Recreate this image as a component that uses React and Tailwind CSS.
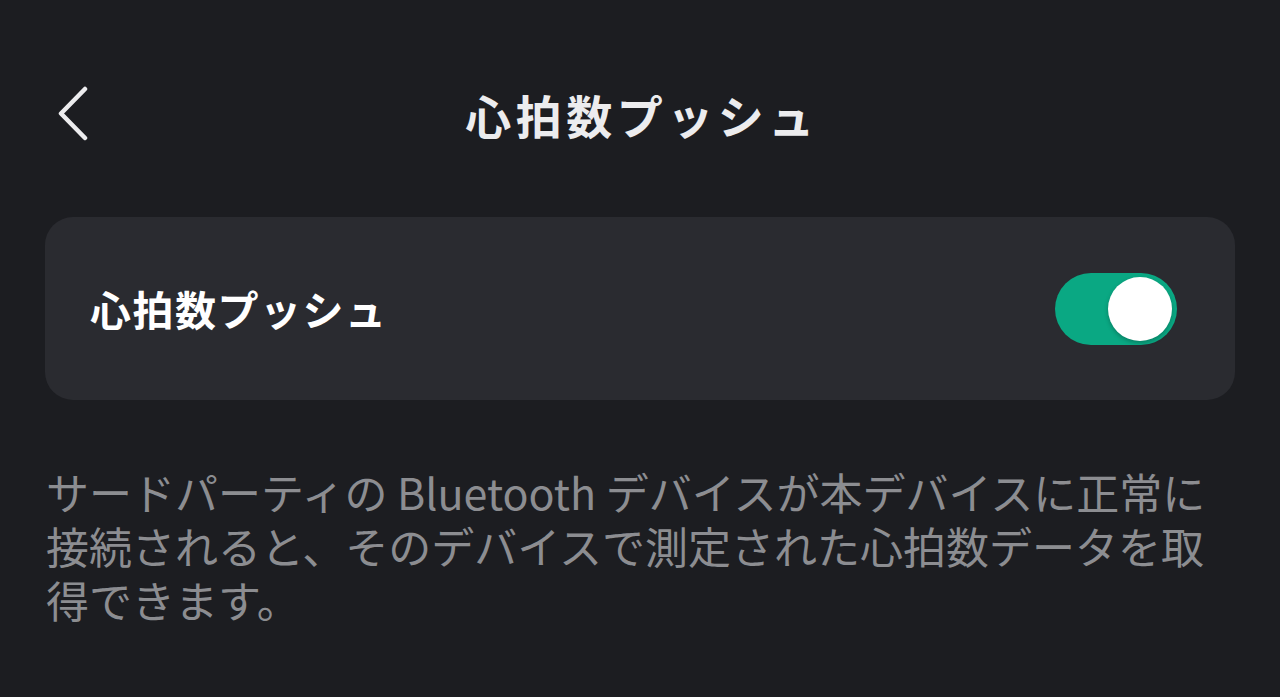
import { useState } from 'react';

const jp = { fontFamily: '"Noto Sans CJK JP", "Noto Sans", sans-serif' };

export default function App() {
  const [on, setOn] = useState(true);

  return (
    <div className="min-h-[697px] w-full bg-[#1c1d21] text-[#ececee]" style={jp}>
      <header className="relative flex h-[236px] items-start justify-center pt-[82px]">
        <button className="absolute left-[52px] top-[86px] flex h-[56px] w-[40px] items-center justify-center">
          <svg width="36" height="56" viewBox="0 0 36 56" fill="none">
            <path d="M31 3 L7 27.5 L31 52" stroke="#ececee" strokeWidth="4.5" strokeLinecap="round" strokeLinejoin="round" />
          </svg>
        </button>
        <h1 className="pl-[4px] text-[46px] font-semibold leading-[64px] tracking-[4.5px]">心拍数プッシュ</h1>
      </header>

      <div className="px-[45px]" style={{ marginTop: -19 }}>
        <div className="flex h-[183px] items-center justify-between rounded-[28px] bg-[#2a2b30] pl-[45px] pr-[58px]">
          <span className="text-[41px] font-bold tracking-[1.5px] text-white">心拍数プッシュ</span>
          <button
            onClick={() => setOn(!on)}
            className={`flex h-[72px] w-[122px] items-center rounded-full px-[5px] ${on ? 'justify-end bg-[#0aa883]' : 'justify-start bg-[#48494e]'}`}
          >
            <span className="block h-[64px] w-[64px] rounded-full bg-white shadow-[0_2px_4px_rgba(0,0,0,0.25)]" />
          </button>
        </div>

        <p className="mt-[64px] pl-[1px] text-[43px] leading-[54px] text-[#8c8d91]">
          サードパーティの Bluetooth デバイスが本デバイスに正常に接続されると、そのデバイスで測定された心拍数データを取得できます。
        </p>
      </div>
    </div>
  );
}
